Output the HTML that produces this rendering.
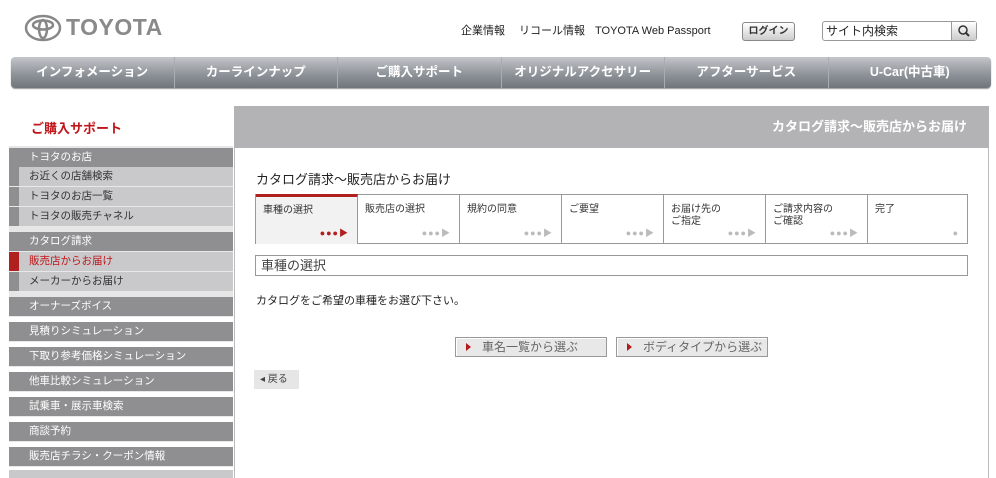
<!DOCTYPE html>
<html><head><meta charset="utf-8"><style>
*{margin:0;padding:0;box-sizing:border-box}
body{width:996px;height:478px;overflow:hidden;background:#fff;font-family:"Liberation Sans","Noto Sans CJK JP",sans-serif;color:#333;position:relative}
.a{position:absolute}
.nav{left:11px;top:57px;width:980px;height:31px;border-radius:4px;background:linear-gradient(#c3c6ca,#8f949a 55%,#6f757b);display:flex;box-shadow:0 1px 1px #999}
.nav div{flex:1;text-align:center;color:#fff;font-weight:bold;font-size:12.5px;line-height:31px;border-right:1px solid #a9adb2}
.nav div:last-child{border:none}
.sb{left:9px;width:224px;font-size:10.5px;line-height:19px;height:20px;padding-left:20px;border-bottom:1px solid #e8e8e8}
.h{background:#8f8e90;color:#fff}
.s{background:#c9c8ca;color:#333}
.s:before{content:"";position:absolute;left:0;top:0;width:10px;height:19px;background:#8f8e90}
.sep{left:9px;width:224px;height:1px;background:#e6e6e6}
.step{top:194px;height:50px;border-right:1px solid #999;font-size:10px;line-height:12px;padding:10px 0 0 7px}
.dots{position:absolute;right:8px;bottom:5px;font-size:9px;color:#bbb;letter-spacing:1px}
.btn{top:337px;height:20px;border:1px solid #999;background:#e8e8e8;font-size:12px;color:#666;line-height:18px;padding-left:26px;box-shadow:inset 1px 1px #fff}
.btn:before{content:"";position:absolute;left:10px;top:5px;border-left:5px solid #b01c1c;border-top:4px solid transparent;border-bottom:4px solid transparent}
.tl{top:24px;font-size:11px;color:#222;line-height:14px}
</style></head><body>
<svg class="a" style="left:24px;top:14px" width="38" height="28" viewBox="0 0 38 28"><g fill="none" stroke="#888" stroke-width="2.5"><ellipse cx="19" cy="14" rx="17" ry="12"/><ellipse cx="19" cy="11" rx="10" ry="4.5"/><ellipse cx="19" cy="15" rx="4" ry="9"/></g></svg>
<div class="a" style="left:66px;top:14px;font-size:23px;font-weight:bold;color:#8a8a8a;letter-spacing:0.5px;line-height:26px">TOYOTA</div>
<div class="a tl" style="left:461px">企業情報</div>
<div class="a tl" style="left:519px">リコール情報</div>
<div class="a tl" style="left:595px">TOYOTA Web Passport</div>
<div class="a" style="left:742px;top:22px;width:53px;height:19px;border:1px solid #888;border-radius:3px;background:linear-gradient(#fff,#ccc);font-size:10px;font-weight:bold;text-align:center;line-height:17px">ログイン</div>
<div class="a" style="left:822px;top:21px;width:155px;height:20px;border:1px solid #999;border-radius:3px;background:#fff;font-size:12px;line-height:18px;padding-left:3px;color:#222">サイト内検索</div>
<div class="a" style="left:951px;top:22px;width:25px;height:18px;background:linear-gradient(#fff,#ccc);border-left:1px solid #999"><svg width="25" height="18"><circle cx="11" cy="8" r="4" fill="none" stroke="#333" stroke-width="1.5"/><line x1="14" y1="11" x2="17" y2="14" stroke="#333" stroke-width="2"/></svg></div>
<div class="a nav"><div>インフォメーション</div><div>カーラインナップ</div><div>ご購入サポート</div><div>オリジナルアクセサリー</div><div>アフターサービス</div><div>U-Car(中古車)</div></div>
<div class="a" style="left:31px;top:118px;font-size:13px;color:#c0161b;font-weight:bold">ご購入サポート</div>
<div class="a" style="left:9px;top:146px;width:224px;height:2px;background:#e6e6e6"></div>
<div class="a sb h" style="top:148px">トヨタのお店</div>
<div class="a sb s" style="top:167px">お近くの店舗検索</div>
<div class="a sb s" style="top:187px">トヨタのお店一覧</div>
<div class="a sb s" style="top:207px">トヨタの販売チャネル</div>
<div class="a sep" style="top:227px;height:5px"></div>
<div class="a sb h" style="top:232px">カタログ請求</div>
<div class="a sb s" style="top:252px;color:#c0161b">販売店からお届け</div>
<div class="a" style="left:9px;top:252px;width:10px;height:19px;background:#b0201f"></div>
<div class="a sb s" style="top:272px">メーカーからお届け</div>
<div class="a sep" style="top:292px;height:5px"></div>
<div class="a sb h" style="top:297px">オーナーズボイス</div>
<div class="a sb h" style="top:322px">見積りシミュレーション</div>
<div class="a sb h" style="top:347px">下取り参考価格シミュレーション</div>
<div class="a sb h" style="top:372px">他車比較シミュレーション</div>
<div class="a sb h" style="top:397px">試乗車・展示車検索</div>
<div class="a sb h" style="top:422px">商談予約</div>
<div class="a sb h" style="top:447px">販売店チラシ・クーポン情報</div>
<div class="a" style="left:9px;top:470px;width:224px;height:8px;background:#c9c8ca"></div>
<div class="a" style="left:234px;top:106px;width:755px;height:372px;border-left:1px solid #bbb;border-right:1px solid #bbb"></div>
<div class="a" style="left:234px;top:106px;width:755px;height:42px;background:#b3b2b4;color:#fff;font-size:13px;font-weight:bold;text-align:right;line-height:42px;padding-right:22px">カタログ請求〜販売店からお届け</div>
<div class="a" style="left:256px;top:169px;font-size:13px;color:#222">カタログ請求〜販売店からお届け</div>
<div class="a" style="left:255px;top:194px;width:713px;height:50px;border:1px solid #999"></div>
<div class="a step" style="left:256px;width:102px;background:#f2f2f2;border-top:3px solid #b0201f;padding-top:8px">車種の選択<span class="dots" style="color:#b0201f">●●●▶</span></div>
<div class="a step" style="left:358px;width:102px">販売店の選択<span class="dots">●●●▶</span></div>
<div class="a step" style="left:460px;width:102px">規約の同意<span class="dots">●●●▶</span></div>
<div class="a step" style="left:562px;width:102px">ご要望<span class="dots">●●●▶</span></div>
<div class="a step" style="left:664px;width:102px">お届け先の<br>ご指定<span class="dots">●●●▶</span></div>
<div class="a step" style="left:766px;width:102px">ご請求内容の<br>ご確認<span class="dots">●●●▶</span></div>
<div class="a step" style="left:868px;width:99px;border:none">完了<span class="dots">●</span></div>
<div class="a" style="left:255px;top:255px;width:713px;height:21px;border:1px solid #999;font-size:13px;color:#444;line-height:19px;padding-left:5px">車種の選択</div>
<div class="a" style="left:256px;top:292px;font-size:11px;color:#222">カタログをご希望の車種をお選び下さい。</div>
<div class="a btn" style="left:455px;width:152px">車名一覧から選ぶ</div>
<div class="a btn" style="left:616px;width:152px">ボディタイプから選ぶ</div>
<div class="a" style="left:254px;top:370px;width:45px;height:19px;background:#e6e6e6;font-size:10px;color:#444;line-height:19px;padding-left:6px">◂ 戻る</div>
</body></html>
